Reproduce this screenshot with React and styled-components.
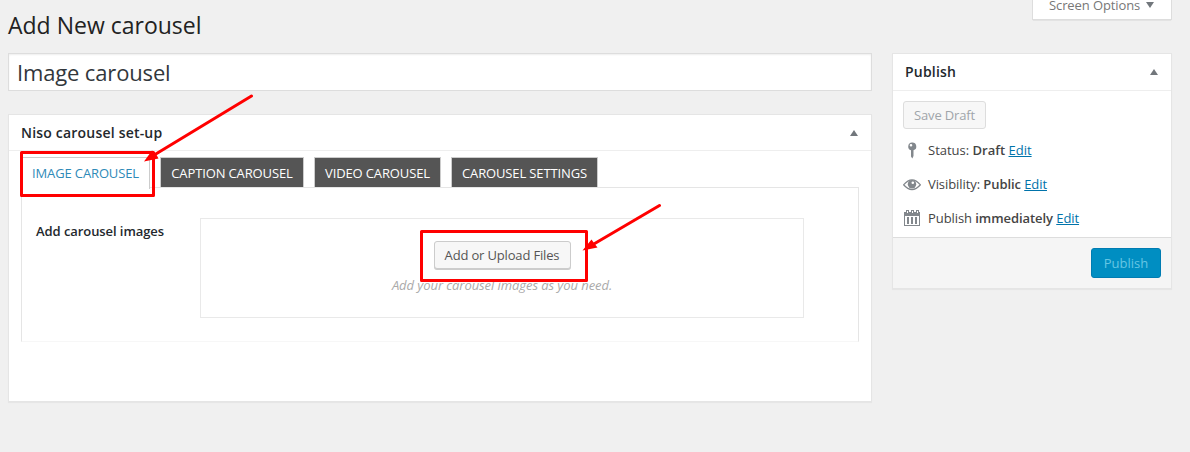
import React from "react";
import styled, { createGlobalStyle } from "styled-components";

const Global = createGlobalStyle`
  *, *::before, *::after { box-sizing: border-box; }
  body {
    margin: 0;
    background: #f0f0f0;
    color: #444;
    font: 13px/18px "Open Sans", "Noto Sans", sans-serif;
    overflow: hidden;
  }
`;

const Page = styled.div`
  position: relative;
  width: 1190px;
  height: 452px;
  padding: 0 18px 0 8px;
  background: #f0f0f0;
`;

const TopBar = styled.header`
  display: flex;
  justify-content: space-between;
  align-items: flex-start;
  height: 53px;
`;

const Title = styled.h1`
  margin: 10px 0 0;
  font-size: 23px;
  font-weight: 400;
  line-height: 30px;
  color: #222;
`;

const ScreenOptions = styled.button`
  display: flex;
  align-items: flex-start;
  gap: 6px;
  width: 140px;
  height: 20px;
  padding: 0 0 0 16px;
  border: 1px solid #ddd;
  border-top: 0;
  background: #fff;
  box-shadow: 0 1px 1px -1px rgba(0, 0, 0, 0.3);
  color: #777;
  font: 13px/10px "Open Sans", sans-serif;
  letter-spacing: -0.1px;
`;

const Arrow = styled.span`
  width: 0;
  height: 0;
  border: 4px solid transparent;
  ${(p) =>
    p.$down
      ? "border-top: 6px solid #72777c; border-bottom: 0; margin-top: 2px;"
      : "border-bottom: 6px solid #72777c; border-top: 0;"}
`;

const Columns = styled.div`
  display: grid;
  grid-template-columns: 864px 280px;
  gap: 20px;
  align-items: start;
`;

const Main = styled.main`
  display: flex;
  flex-direction: column;
  gap: 23px;
`;

const TitleInput = styled.input`
  width: 100%;
  height: 38px;
  padding: 1px 8px 2px;
  border: 1px solid #ddd;
  background: #fff;
  box-shadow: inset 0 1px 2px rgba(0, 0, 0, 0.07);
  color: #32373c;
  font: 22px/30px "Open Sans", sans-serif;
  letter-spacing: -0.15px;
  outline: none;
`;

const Box = styled.section`
  height: ${(p) => p.$height}px;
  border: 1px solid #e5e5e5;
  background: #fff;
  box-shadow: 0 1px 1px rgba(0, 0, 0, 0.04);
`;

const BoxHeader = styled.div`
  display: flex;
  justify-content: space-between;
  align-items: center;
  height: ${(p) => p.$height}px;
  padding: 0 13px 0 12px;
  border-bottom: 1px solid #eee;
`;

const BoxTitle = styled.h2`
  margin: 0;
  font-size: 14px;
  font-weight: 600;
  letter-spacing: 0.2px;
  line-height: 20px;
  color: #23282d;
`;

const SetupBody = styled.div`
  padding: 6px 12px 0;
`;

const Tabs = styled.div`
  display: flex;
  gap: 10px;
  height: 30px;
`;

const Tab = styled.button`
  width: ${(p) => p.$width}px;
  height: ${(p) => (p.$active ? 32 : 30)}px;
  padding: ${(p) => (p.$active ? "0 0 1px" : "0")};
  border: 1px solid #ccc;
  border-bottom: 0;
  background: ${(p) => (p.$active ? "#fff" : "#555")};
  color: ${(p) => (p.$active ? "#2e8ab8" : "#fff")};
  font: 13px/18px "Open Sans", sans-serif;
  letter-spacing: -0.13px;
  white-space: nowrap;
  z-index: 1;
`;

const TabPanel = styled.div`
  display: flex;
  height: 155px;
  padding: 30px 54px 0 14px;
  border: 1px solid #e5e5e5;
  border-bottom-color: #f7f7f7;
`;

const FieldLabel = styled.div`
  width: 164px;
  padding-top: 4px;
  font-weight: 600;
  letter-spacing: -0.07px;
  color: #23282d;
`;

const DropArea = styled.div`
  display: flex;
  flex-direction: column;
  align-items: center;
  gap: 7px;
  flex: 1;
  height: 100px;
  padding-top: 22px;
  border: 1px solid #e9e9e9;
`;

const Hint = styled.p`
  margin: 0;
  color: #aaa;
  font-style: italic;
  letter-spacing: -0.07px;
`;

const Button = styled.button`
  width: ${(p) => p.$width}px;
  height: 28px;
  padding: 0;
  border: 1px solid ${(p) => (p.$muted ? "#ddd" : "#ccc")};
  border-radius: 3px;
  background: #f7f7f7;
  box-shadow: ${(p) => (p.$muted ? "none" : "0 1px 0 #ccc")};
  color: ${(p) => (p.$muted ? "#a0a5aa" : "#555")};
  font: 13px/26px "Open Sans", sans-serif;
  letter-spacing: -0.16px;
  white-space: nowrap;
`;

const PrimaryButton = styled(Button)`
  height: 30px;
  border-color: #007cb2;
  background: #008ec2;
  box-shadow: none;
  color: #66c6e4;
  letter-spacing: 0;
`;

const PublishBody = styled.div`
  height: 146px;
  padding: 10px;
`;

const StatusList = styled.div`
  display: flex;
  flex-direction: column;
  gap: 14px;
  padding-top: 11px;
`;

const StatusRow = styled.div`
  display: flex;
  align-items: center;
  gap: 7px;
  height: 20px;
  letter-spacing: ${(p) => p.$tracking}px;

  svg { flex: none; }
  b { font-weight: 600; }
`;

const EditLink = styled.a`
  color: #0073aa;
  text-decoration: underline;
`;

const BoxFooter = styled.div`
  display: flex;
  justify-content: flex-end;
  height: 51px;
  padding: 10px;
  border-top: 1px solid #ddd;
  background: #f5f5f5;
`;

const Annotations = styled.svg`
  position: absolute;
  inset: 0;
  z-index: 2;
  pointer-events: none;
`;

const PinIcon = () => (
  <svg width="18" height="20" viewBox="0 0 18 20" fill="#82878c">
    <path fillRule="evenodd" d="M9 2.500a4 4 0 0 1 1.500 7.800V16L9.300 18.500 8 16.500v-6.200A4 4 0 0 1 9 2.500zM8 4a1.300 1.300 0 1 0 0 2.600A1.300 1.300 0 0 0 8 4z" />
  </svg>
);

const EyeIcon = () => (
  <svg width="18" height="20" viewBox="0 0 18 20">
    <path d="M.6 10.800Q9 .8 17.400 10.800 9 20.300.6 10.800z" fill="none" stroke="#82878c" strokeWidth="1.3" />
    <circle cx="9" cy="10.300" r="4.200" fill="#82878c" />
    <circle cx="9.800" cy="8.700" r="1.300" fill="#fff" />
  </svg>
);

const CalendarIcon = () => (
  <svg width="18" height="20" viewBox="0 0 18 20" fill="#82878c">
    <path fillRule="evenodd" d="M1 4h2V2h3v2h2V2h3v2h2V2h3v2h1v14H1zM2 8v9h14V8zM4 3h1v2H4zM9 3h1v2H9zM14 3h1v2h-1z" />
    <path d="M4 9h2v7H4zM8 9h2v7H8zM12 9h2v7h-2z" />
  </svg>
);

const TABS = [
  { label: "IMAGE CAROUSEL", width: 129, active: true },
  { label: "CAPTION CAROUSEL", width: 144 },
  { label: "VIDEO CAROUSEL", width: 127 },
  { label: "CAROUSEL SETTINGS", width: 147 },
];

const STATUS = [
  { icon: PinIcon, label: "Status:", value: "Draft", tracking: 0 },
  { icon: EyeIcon, label: "Visibility:", value: "Public", tracking: -0.08 },
  { icon: CalendarIcon, label: "Publish", value: "immediately", tracking: -0.07 },
];

export default function App() {
  return (
    <Page>
      <Global />
      <TopBar>
        <Title>Add New carousel</Title>
        <ScreenOptions>
          Screen Options <Arrow $down />
        </ScreenOptions>
      </TopBar>
      <Columns>
        <Main>
          <TitleInput defaultValue="Image carousel" />
          <Box $height={288}>
            <BoxHeader $height={36}>
              <BoxTitle>Niso carousel set-up</BoxTitle>
              <Arrow />
            </BoxHeader>
            <SetupBody>
              <Tabs>
                {TABS.map((t) => (
                  <Tab key={t.label} $width={t.width} $active={t.active}>
                    {t.label}
                  </Tab>
                ))}
              </Tabs>
              <TabPanel>
                <FieldLabel>Add carousel images</FieldLabel>
                <DropArea>
                  <Button $width={137}>Add or Upload Files</Button>
                  <Hint>Add your carousel images as you need.</Hint>
                </DropArea>
              </TabPanel>
            </SetupBody>
          </Box>
        </Main>
        <Box as="aside" $height={236}>
          <BoxHeader $height={37}>
            <BoxTitle>Publish</BoxTitle>
            <Arrow />
          </BoxHeader>
          <PublishBody>
            <Button $width={83} $muted>Save Draft</Button>
            <StatusList>
              {STATUS.map(({ icon: Icon, label, value, tracking }) => (
                <StatusRow key={label} $tracking={tracking}>
                  <Icon />
                  <span>
                    {label} <b>{value}</b> <EditLink>Edit</EditLink>
                  </span>
                </StatusRow>
              ))}
            </StatusList>
          </PublishBody>
          <BoxFooter>
            <PrimaryButton $width={70}>Publish</PrimaryButton>
          </BoxFooter>
        </Box>
      </Columns>
      <Annotations width="1190" height="452" fill="none" stroke="#f00" strokeWidth="3" strokeLinejoin="round" strokeLinecap="round">
        <rect x="21.5" y="152.5" width="132" height="43" />
        <rect x="421.5" y="231.5" width="165" height="49" />
        <path d="M251.500 96 155 154.500M659.500 205.500 593 244.500" />
        <path d="M144 161.500 152 150.500 155.500 153 158.500 158.500zM582.500 250.500 591.500 239.500 594 243 597.500 247.500z" fill="#f00" stroke="none" />
      </Annotations>
    </Page>
  );
}
